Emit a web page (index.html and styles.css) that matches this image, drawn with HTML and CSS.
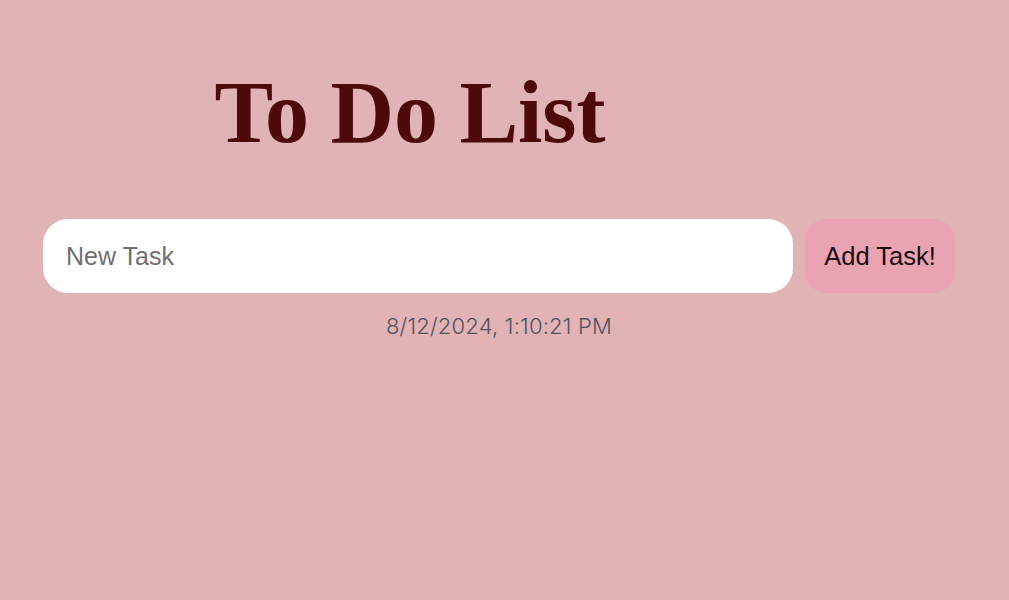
FILE: index.html
```html
<!DOCTYPE html>
<html>
<head>
<meta charset="utf-8">
<link rel="stylesheet" href="styles.css">
</head>
<body>
<div class="app">
  <header class="head">
    <h1 class="title">To Do List</h1>
  </header>
  <div class="row">
    <input class="task-input" type="text" placeholder="New Task">
    <button class="add-btn">Add Task!</button>
  </div>
  <div class="date">8/12/2024, 1:10:21 PM</div>
</div>
</body>
</html>
```
FILE: styles.css
```css
html, body {
  margin: 0;
  padding: 0;
  background: #e1b3b5;
  height: 100%;
}
.app {
  display: flex;
  flex-direction: column;
  padding: 0 54px 0 43px;
}
.head {
  width: 734px;
  text-align: center;
  padding-top: 63px;
}
.title {
  margin: 0;
  font-family: "Liberation Serif", serif;
  font-weight: bold;
  font-size: 88px;
  line-height: 100px;
  letter-spacing: -0.2px;
  color: #4d0a0a;
}
.row {
  display: flex;
  gap: 12px;
  margin-top: 56px;
}
.task-input {
  flex: 0 0 750px;
  height: 74px;
  box-sizing: border-box;
  border: none;
  border-radius: 25px;
  background: #fff;
  padding: 0 23px;
  font-family: "Liberation Sans", Arial, sans-serif;
  font-size: 25px;
  outline: none;
}
.task-input::placeholder {
  color: #6f6f6f;
}
.add-btn {
  width: 150px;
  height: 74px;
  border: none;
  border-radius: 22px;
  background: #e9a3b2;
  color: #1a0a10;
  font-family: "Liberation Sans", Arial, sans-serif;
  font-size: 25.5px;
  padding: 0;
}
.date {
  margin-top: 20px;
  text-align: center;
  font-family: "Inter", "Liberation Sans", sans-serif;
  font-size: 22px;
  font-weight: 300;
  letter-spacing: 0.2px;
  color: #52525e;
}
```
